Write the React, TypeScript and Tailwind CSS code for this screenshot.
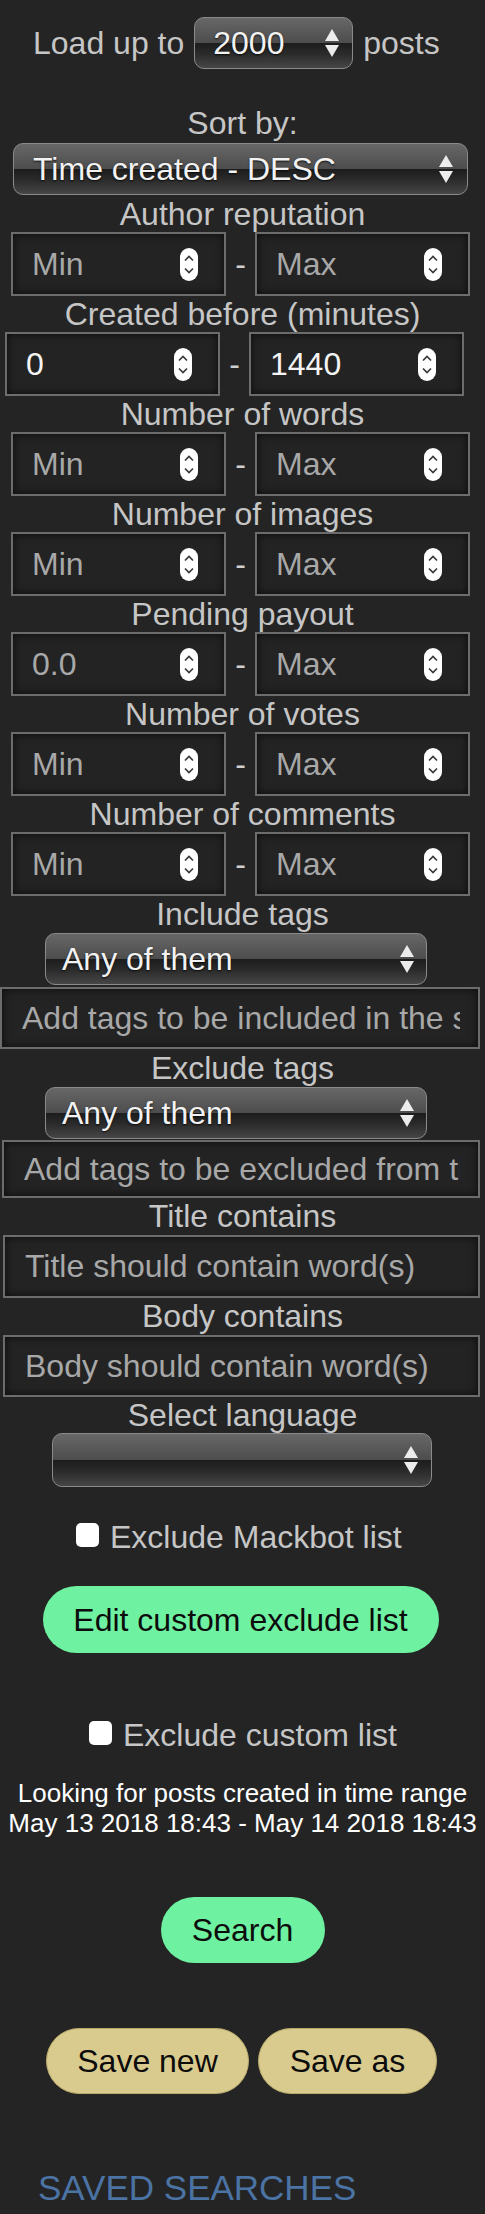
import React from "react";

const font = "font-['Liberation_Sans',Arial,Helvetica,sans-serif]";

const Arrows = function () {
    return (
        <svg width="14" height="28" viewBox="0 0 14 28" className="shrink-0">
            <polygon points="7,0 14,12 0,12" fill="#ececec" />
            <polygon points="0,16 14,16 7,28" fill="#ececec" />
        </svg>
    );
};

const Spinner = function () {
    return (
        <svg width="18" height="33" viewBox="0 0 18 33" className="shrink-0">
            <rect x="0" y="0" width="18" height="33" rx="9" fill="#ffffff" />
            <path d="M5 12.5 L9 8.5 L13 12.5" stroke="#3a3a3a" strokeWidth="1.7" fill="none" />
            <path d="M5 20.5 L9 24.5 L13 20.5" stroke="#3a3a3a" strokeWidth="1.7" fill="none" />
        </svg>
    );
};

interface SelectProps {
    value: string;
    className: string;
    padLeft: string;
    padRight: string;
}

const GlossySelect = function (props: SelectProps) {
    return (
        <div
            className={
                "flex items-center justify-between rounded-[10px] border-[1.5px] border-[#8a8a8a] bg-[linear-gradient(to_bottom,#676767_0%,#4d4d4d_50%,#1c1c1c_50%,#2b2b2b_72%,#464646_100%)] text-[32px] leading-none text-[#f2f2f2] [text-shadow:0_1px_2px_rgba(0,0,0,0.8)] " +
                props.className +
                " " +
                props.padLeft +
                " " +
                props.padRight
            }
        >
            <span>{props.value}</span>
            <Arrows />
        </div>
    );
};

interface BoxProps {
    text: string;
    filled?: boolean;
}

const NumberBox = function (props: BoxProps) {
    return (
        <div className="flex h-[64px] w-[215px] items-center justify-between border-2 border-[#6c6c6c] bg-[#232323] pl-[19px] pr-[26px] shadow-[inset_0_0_8px_rgba(0,0,0,0.7)]">
            <span className={props.filled ? "text-[32px] text-[#f4f4f4]" : "text-[32px] text-[#a8a8a8]"}>
                {props.text}
            </span>
            <Spinner />
        </div>
    );
};

interface RangeProps {
    label: string;
    min: string;
    max: string;
    filled?: boolean;
    shift?: boolean;
}

const Label = function (props: {text: string; className?: string}) {
    return (
        <div className={"h-[36px] text-center text-[32px] leading-[36px] text-[#c6c6c6] " + (props.className || "")}>
            {props.text}
        </div>
    );
};

const RangeRow = function (props: RangeProps) {
    return (
        <div>
            <Label text={props.label} />
            <div className={props.shift ? "flex items-center pl-[5px]" : "flex items-center pl-[11px]"}>
                <NumberBox text={props.min} filled={props.filled} />
                <span className="w-[29px] text-center text-[32px] text-[#d0d0d0]">-</span>
                <NumberBox text={props.max} filled={props.filled} />
            </div>
        </div>
    );
};

const TextBox = function (props: {placeholder: string; className: string}) {
    return (
        <input
            type="text"
            readOnly
            placeholder={props.placeholder}
            className={
                "block border-2 border-[#6c6c6c] bg-[#232323] pl-[20px] pr-[18px] text-[32px] text-[#f4f4f4] placeholder:text-[#a8a8a8] shadow-[inset_0_0_8px_rgba(0,0,0,0.7)] outline-none " +
                props.className
            }
        />
    );
};

const Checkbox = function (props: {text: string; className: string}) {
    return (
        <div className={"flex items-center " + props.className}>
            <div className="mb-[6px] h-[24px] w-[23px] rounded-[5px] bg-white" />
            <span className="ml-[11px] text-[32px] leading-[37px] text-[#c6c6c6]">{props.text}</span>
        </div>
    );
};

export default function App() {
    const ranges: RangeProps[] = [
        {label: "Author reputation", min: "Min", max: "Max"},
        {label: "Created before (minutes)", min: "0", max: "1440", filled: true, shift: true},
        {label: "Number of words", min: "Min", max: "Max"},
        {label: "Number of images", min: "Min", max: "Max"},
        {label: "Pending payout", min: "0.0", max: "Max"},
        {label: "Number of votes", min: "Min", max: "Max"},
        {label: "Number of comments", min: "Min", max: "Max"}
    ];

    return (
        <div className={"min-h-[2214px] w-full overflow-hidden bg-[#242424] pb-[20px] " + font}>
            <div className="flex items-center pl-[33px] pt-[17px] text-[32px] text-[#c6c6c6]">
                <span>Load up to</span>
                <GlossySelect value="2000" className="ml-[10px] h-[52px] w-[159px]" padLeft="pl-[18px]" padRight="pr-[13px]" />
                <span className="ml-[10px]">posts</span>
            </div>

            <Label text="Sort by:" className="mt-[36px]" />
            <GlossySelect
                value="Time created - DESC"
                className="ml-[13px] mt-[2px] h-[52px] w-[455px]"
                padLeft="pl-[19px]"
                padRight="pr-[14px]"
            />

            <div className="mt-[1px]">
                {ranges.map((r) => (
                    <RangeRow key={r.label} {...r} />
                ))}
            </div>

            <Label text="Include tags" />
            <GlossySelect value="Any of them" className="ml-[45px] mt-[1px] h-[52px] w-[382px]" padLeft="pl-[16px]" padRight="pr-[12px]" />
            <TextBox placeholder="Add tags to be included in the search" className="mt-[2px] h-[62px] w-[480px]" />

            <Label text="Exclude tags" className="mt-[1px]" />
            <GlossySelect value="Any of them" className="ml-[45px] mt-[1px] h-[52px] w-[382px]" padLeft="pl-[16px]" padRight="pr-[12px]" />
            <TextBox placeholder="Add tags to be excluded from the search" className="ml-[2px] mt-[1px] h-[58px] w-[478px]" />

            <Label text="Title contains" />
            <TextBox placeholder="Title should contain word(s)" className="ml-[3px] mt-[1px] h-[63px] w-[477px]" />

            <Label text="Body contains" />
            <TextBox placeholder="Body should contain word(s)" className="ml-[3px] mt-[1px] h-[62px] w-[477px]" />

            <Label text="Select language" />
            <GlossySelect value="" className="ml-[52px] h-[54px] w-[380px]" padLeft="pl-[16px]" padRight="pr-[13px]" />

            <Checkbox text="Exclude Mackbot list" className="mt-[32px] pl-[76px]" />

            <div className="mt-[30px] flex justify-center pr-[4px]">
                <button className="h-[67px] w-[396px] rounded-full bg-[#6ef1a1] text-[32px] text-[#0c0c0c]">
                    Edit custom exclude list
                </button>
            </div>

            <Checkbox text="Exclude custom list" className="mt-[64px] pl-[89px]" />

            <div className="mt-[24px] text-center text-[26px] leading-[30px] text-white">
                <div>Looking for posts created in time range</div>
                <div>May 13 2018 18:43 - May 14 2018 18:43</div>
            </div>

            <div className="mt-[59px] flex justify-center">
                <button className="h-[66px] w-[164px] rounded-full bg-[#6ef1a1] text-[32px] text-[#0c0c0c]">
                    Search
                </button>
            </div>

            <div className="ml-[46px] mt-[65px] flex gap-[9px]">
                <button className="h-[66px] w-[203px] rounded-full border border-[#b9ab6c] bg-[#d9cb8e] text-[32px] text-[#0c0c0c]">
                    Save new
                </button>
                <button className="h-[66px] w-[179px] rounded-full border border-[#b9ab6c] bg-[#d9cb8e] text-[32px] text-[#0c0c0c]">
                    Save as
                </button>
            </div>

            <div className="ml-[38px] mt-[74px] text-[35px] leading-[40px] text-[#4b73a3]">SAVED SEARCHES</div>
        </div>
    );
}
